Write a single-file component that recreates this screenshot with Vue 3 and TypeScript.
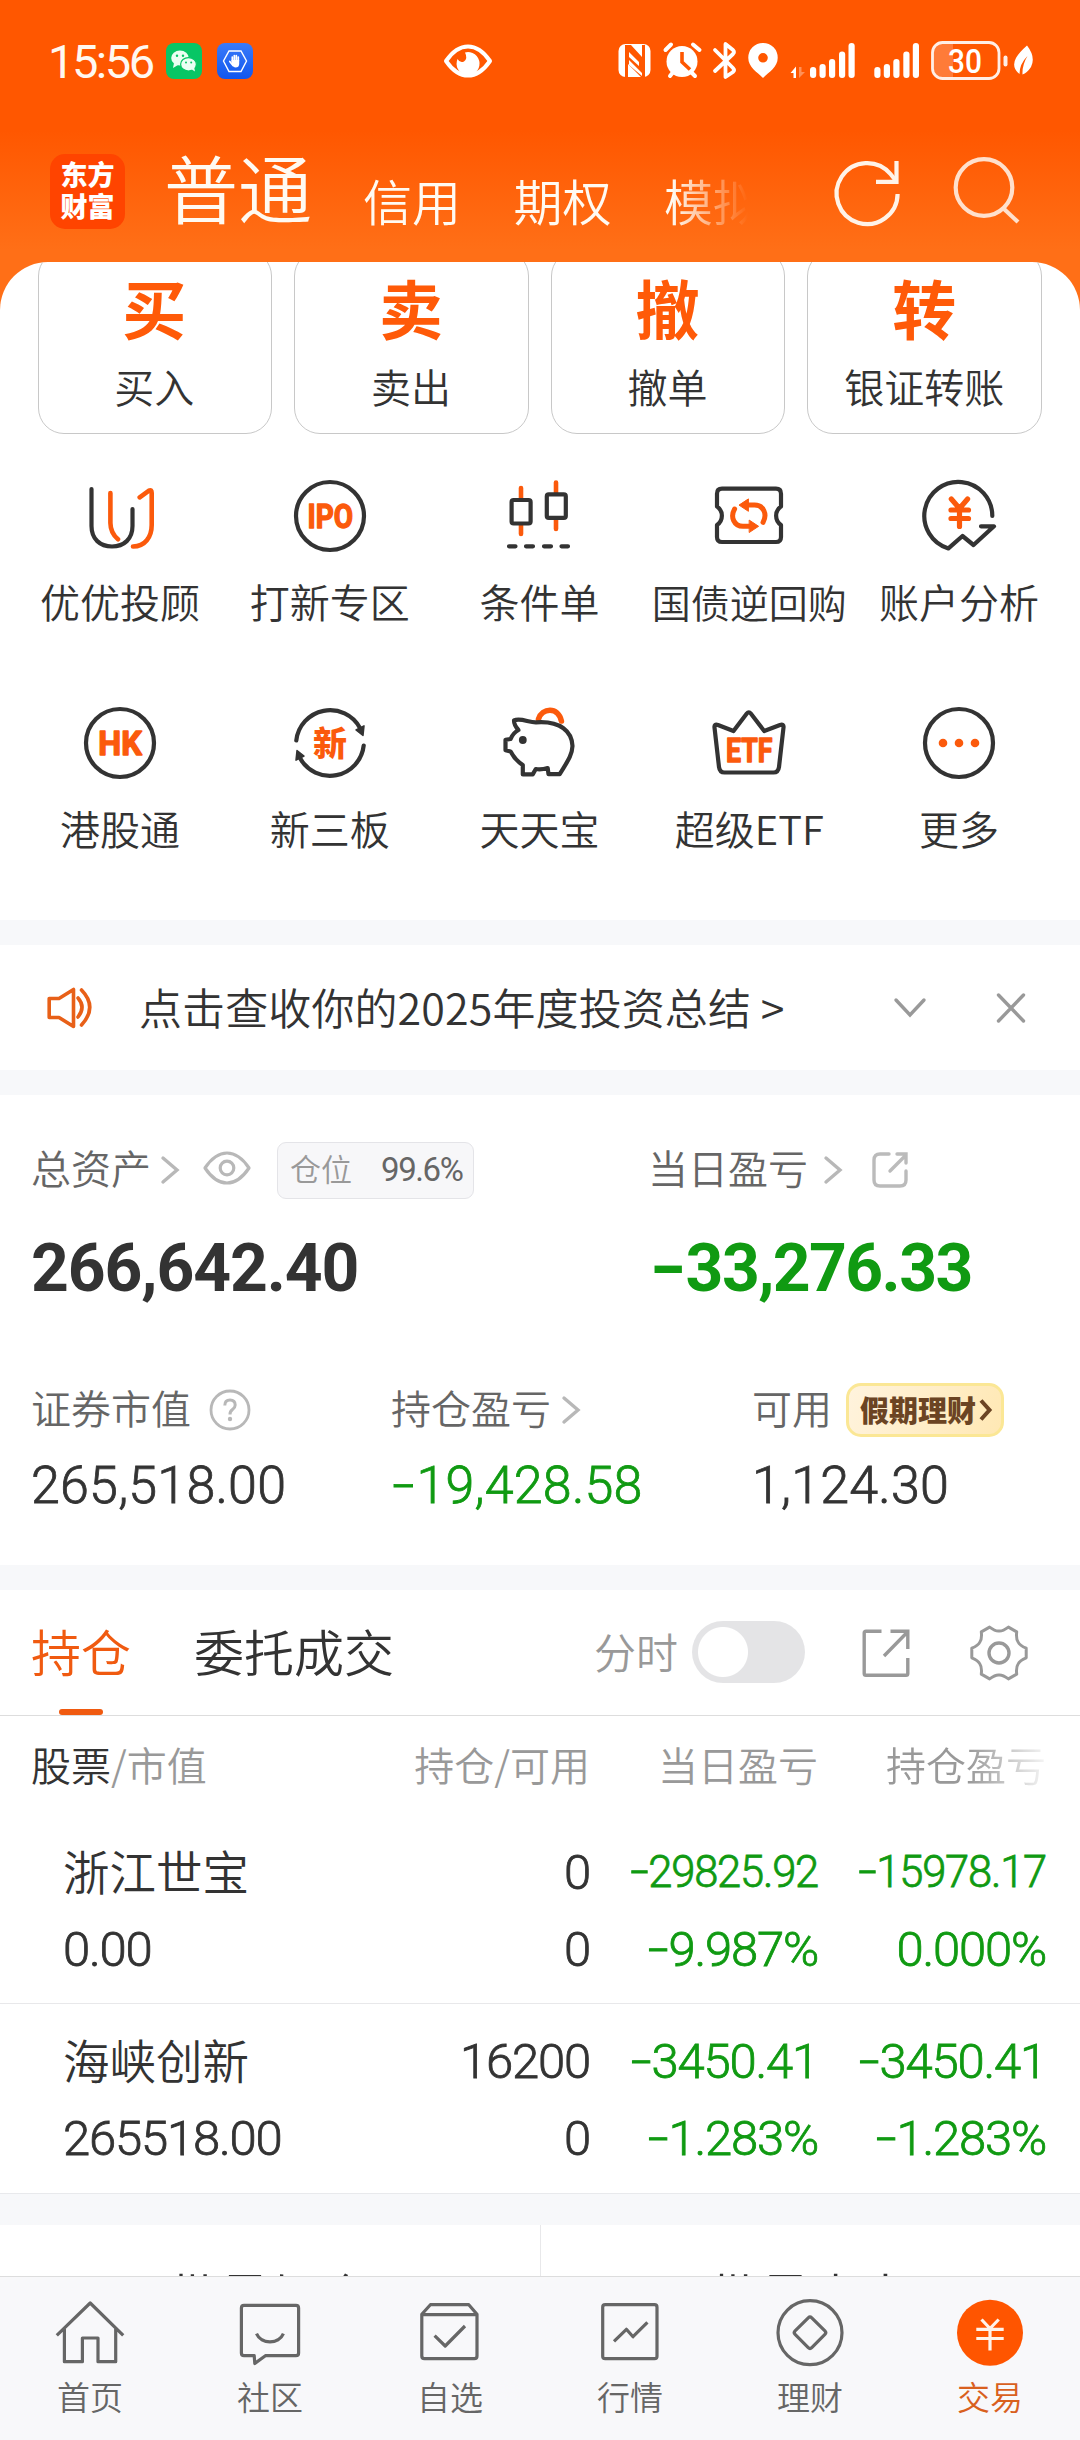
<script setup lang="ts">
interface Tile { icon: string; label: string }
interface Holding {
  name: string; value: string; qty: string; usable: string
  day: string; dayPct: string; total: string; totalPct: string; compact: boolean
}

const orders: Tile[] = [
  { icon: '买', label: '买入' },
  { icon: '卖', label: '卖出' },
  { icon: '撤', label: '撤单' },
  { icon: '转', label: '银证转账' },
]

const D = 'stroke="#333" stroke-width="4.2"'
const O = 'stroke="#fb5a0c" stroke-width="4.6"'
const ring = `<circle cx="40" cy="40" r="34" ${D}/>`
const word = (t: string, x: number, y: number, w: number) =>
  `<text x="${x}" y="${y}" textLength="${w}" lengthAdjust="spacingAndGlyphs" font-family="Roboto, sans-serif" font-weight="700" font-size="33" fill="#fb5a0c" stroke="#fb5a0c" stroke-width="1.4">${t}</text>`

const tiles: Tile[] = [
  { label: '优优投顾', icon: `<path ${D} d="M11.5 13V50C11.5 63 20 70.5 32 70.5S52.5 63 52.5 50V33"/><path ${O} d="M30.4 17V47Q30.5 57 38 63.3M59.7 21.3L69 14.6Q71.7 13.2 71.7 17V49C71.7 61 65 70.5 53 70.5"/>` },
  { label: '打新专区', icon: ring + word('IPO', 17.5, 52, 45.5) },
  { label: '条件单', icon: `<path ${O} d="M22 12V22M22 49V58M57 6.5V17M57 43V53"/><rect ${D} x="12.6" y="24" width="19" height="23.5" rx="2"/><rect ${D} x="47.8" y="18.4" width="19" height="23.5" rx="2"/><path ${D} d="M10 70.3H16.5M27 70.3H34M45 70.3H52M62.5 70.3H69"/>` },
  { label: '国债逆回购', icon: `<path ${D} d="M13 12.7H67Q72 12.7 72 17.7V30.5C65.5 35 65.5 44.5 72 49V61Q72 66 67 66H13Q8 66 8 61V49C14.5 44.5 14.5 35 8 30.5V17.7Q8 12.7 13 12.7Z"/><g id="turn"><path stroke="#fb5a0c" stroke-width="5" d="M25.6 33C21 41 25 50.3 34 50.3H41"/><path fill="#fb5a0c" stroke="#fb5a0c" d="M40.5 44.3L49.6 50.3L40.5 56.3Z"/></g><use href="#turn" transform="rotate(180 39.8 39.7)"/>` },
  { label: '账户分析', icon: `<path ${D} d="M73.3 40A34 34 0 1 0 29.4 72.4L43.5 60L54.5 69L75 50.3H62"/><path stroke="#fb5a0c" stroke-width="5.2" d="M32.3 23L40.5 32.5L48.6 23M32 34H49.5M32 42.5H49.5M40.5 33V50.5"/>` },
  { label: '港股通', icon: ring + word('HK', 18.3, 52, 43.5) },
  { label: '新三板', icon: `<path ${D} d="M6.3 37.5A34 34 0 0 1 70 25M73.7 42.5A34 34 0 0 1 10 55"/><path fill="#333" stroke="#333" stroke-width="1.5" d="M66 27L74 22.8L73 32.5ZM14 53L6 57.2L7 47.5Z"/><text x="23" y="52.5" font-family="Noto Sans CJK SC, sans-serif" font-weight="900" font-size="34" fill="#fb5a0c">新</text>` },
  { label: '天天宝', icon: `<path stroke="#fb5a0c" stroke-width="5.6" d="M39.5 16C43 5 59 3 62.4 18"/><path ${D} fill="#fff" d="M15 17.5C21 14.5 30 19.5 37 19.3C62 17.5 73 29 73.5 43C73 53 68 59 60.7 71.2H49.5L48.7 65Q42 67 36.8 66L33.7 71.4H23.8V62Q16 57 11.6 48.5L6.5 47.3V36.8L11.6 36Q14 30 19.4 27Q15 22 15 17.5Z"/><circle cx="23.8" cy="37" r="3.9" fill="#333"/>` },
  { label: '超级ETF', icon: `<path ${D} d="M5.5 24.5Q5 20.8 9 22L24.5 28L37.8 10.5Q39.8 8 41.8 10.5L55.2 28L71 22Q75 20.8 74.5 24.5L70 64Q69.3 69.5 64.5 69.5H15.5Q10.7 69.5 10 64Z"/>` + word('ETF', 17, 58.7, 46.5) },
  { label: '更多', icon: ring + '<g fill="#fb5a0c"><circle cx="24" cy="40" r="4.3"/><circle cx="40" cy="40" r="4.3"/><circle cx="56" cy="40" r="4.3"/></g>' },
]

const holdings: Holding[] = [
  { name: '浙江世宝', value: '0.00', qty: '0', usable: '0', day: '-29825.92', dayPct: '-9.987%', total: '-15978.17', totalPct: '0.000%', compact: true },
  { name: '海峡创新', value: '265518.00', qty: '16200', usable: '0', day: '-3450.41', dayPct: '-1.283%', total: '-3450.41', totalPct: '-1.283%', compact: false },
]

const nav: Tile[] = [
  { label: '首页', icon: '<path d="M2.8 38.3L36.2 6L69.2 38.3M10.4 32V64.7H28.4V41H44V64.7H61.7V32"/>' },
  { label: '社区', icon: '<path d="M10 8.3H62Q64.6 8.3 64.6 11V56Q64.6 58.7 62 58.7H31.4L20.8 66.5L20.2 58.7H10Q7.4 58.7 7.4 56V11Q7.4 8.3 10 8.3ZM22.5 36.7C27 47.5 45 47.5 49.4 36.7"/>' },
  { label: '自选', icon: '<path d="M7.8 17.3L16.4 7.7H54.8L63 17.3V59Q63 61.7 60.3 61.7H10.5Q7.8 61.7 7.8 59ZM7.8 17.6H63M20.6 38.7L31.2 49L51 29"/>' },
  { label: '行情', icon: '<rect x="8.7" y="7.7" width="54.3" height="54" rx="2.5"/><path d="M20 44.3L32.4 32.3L39 39.7L53.4 25.3"/>' },
  { label: '理财', icon: '<circle cx="36" cy="35.7" r="32"/><rect x="24.2" y="23.9" width="23.6" height="23.6" rx="2.5" transform="rotate(45 36 35.7)"/>' },
  { label: '交易', icon: '<circle cx="36" cy="35.7" r="33" fill="#ff5500" stroke="none"/><path stroke="#fff3ea" stroke-width="3.2" d="M27.5 22.5L36 31.5L44.7 22.5M22.3 32.3H49.7M22.3 41.5H49.7M36 31.5V53.5"/>' },
]

const pt = (deg: number, r: number) => {
  const a = (deg * Math.PI) / 180
  return `${(30 + r * Math.cos(a)).toFixed(1)} ${(30 + r * Math.sin(a)).toFixed(1)}`
}
const gear = Array.from({ length: 6 }, (_, k) => {
  const a = k * 60
  return `${k ? 'L' : 'M'}${pt(a - 10, 27.6)}L${pt(a + 10, 27.6)}Q${pt(a + 20, 22)} ${pt(a + 30, 22)}Q${pt(a + 40, 22)} ${pt(a + 50, 27.6)}`
}).join('') + 'Z'
</script>

<template>
  <div class="app">
    <header class="head">
      <div class="status">
        <span class="time">15:56</span>
        <svg class="s-wx" width="36" height="36" viewBox="0 0 36 36"><rect width="36" height="36" rx="8" fill="#07c665" /><ellipse cx="14" cy="15" rx="8.8" ry="7.5" fill="#eafff3" /><path d="M8 20l-1 5 5-3z" fill="#eafff3" /><ellipse cx="22.5" cy="21.3" rx="7.9" ry="6.7" fill="#eafff3" stroke="#07c665" stroke-width="1.2" /><path d="M25 26l4 2.500-1-5z" fill="#eafff3" /><g fill="#07c665"><circle cx="11" cy="12.700" r="1.200" /><circle cx="17" cy="12.700" r="1.200" /><circle cx="20" cy="19.500" r="1" /><circle cx="25.200" cy="19.500" r="1" /></g></svg>
        <svg class="s-blue" width="36" height="36" viewBox="0 0 36 36"><defs><linearGradient id="bl" x2="0" y2="1"><stop stop-color="#3a7bfa" /><stop offset="1" stop-color="#1156ee" /></linearGradient></defs><rect width="36" height="36" rx="8" fill="url(#bl)" /><path d="M12 8H24L29.500 18L24 28.500H12L6.500 18Z" fill="none" stroke="#fff" stroke-width="1.400" /><path d="M15.300 18V14M17.300 18V12.500M19.300 18V12.500M21.300 18V14M12.800 18.500L16 22.500" stroke="#fff" stroke-width="1.700" stroke-linecap="round" /><path d="M14.500 17H22.200V21Q22 24.500 18.500 24.500Q16.500 24.500 14.500 21Z" fill="#fff" /></svg>
        <svg class="s-eye" width="50" height="36" viewBox="0 0 50 36"><path d="M3 18Q13 3.500 25 3.500T47 18Q37 32.500 25 32.500T3 18Z" fill="none" stroke="#fff" stroke-width="4" stroke-linejoin="round" /><path d="M22 9.500A11.500 11.500 0 1 1 14.500 16Q17 20.500 21 18.500Q25 15.500 22 9.500Z" fill="#fff" /></svg>
        <svg class="s-right" width="420" height="42" viewBox="615 40 420 42">
          <g fill="#fff">
            <rect x="617.500" y="44" width="32" height="33" rx="7" />
            <path d="M624 45H630L641 57V45H644V77H640L627 64V77H624Z" fill="#ff5700" />
            <path d="M628 52L638 62V66L628 57ZM628 60L641 73V76L628 65Z" />
            <circle cx="681" cy="61.500" r="15.500" />
            <path d="M664.500 50L670 44.500M692 44.500L698.500 50M669 76L673 71M689 71L694 76" stroke="#fff" stroke-width="4" stroke-linecap="round" />
            <path d="M681 52V62L689 69.500" fill="none" stroke="#ff5700" stroke-width="3.600" />
            <path d="M714 50L732 68Q734 70 732 72L724.500 77V44L732 50Q734 52 732 54L714 71" fill="none" stroke="#fff" stroke-width="3.800" stroke-linecap="round" stroke-linejoin="round" />
            <path d="M762 43A14.500 14.500 0 0 1 776.700 58C776.700 67 768 72 762 78C756 72 747.300 67 747.300 58A14.500 14.500 0 0 1 762 43ZM762 53A4.800 4.800 0 1 0 762 62.600A4.800 4.800 0 0 0 762 53Z" fill-rule="evenodd" />
            <path d="M789.500 73L795 66.500V78H792.500V73Z" /><path d="M798 67V78L804 72H800.500V67Z" opacity=".35" />
            <g id="bars"><rect x="809" y="67" width="6.200" height="11" rx="3" /><rect x="818.500" y="64" width="6.200" height="14" rx="3" /><rect x="828" y="59" width="6.200" height="19" rx="3" /><rect x="838" y="51.500" width="6.200" height="26.500" rx="3" /><rect x="847.500" y="43" width="6.200" height="35" rx="3" /></g>
            <use href="#bars" x="64.300" />
            <path d="M943 43.500H952V77.500H943Q932.500 77.500 932.500 67V54Q932.500 43.500 943 43.500Z" opacity=".22" />
            <rect x="931.500" y="42.500" width="66.500" height="36" rx="10" fill="none" stroke="#fff" stroke-opacity=".9" stroke-width="2.800" />
            <rect x="1002.500" y="55.500" width="4" height="11" rx="2" opacity=".9" />
            <path d="M1026 45.500Q1035 57 1030 67Q1026 73 1021.500 74.500Q1021 65 1026.500 56Q1018.500 64 1018.500 74Q1010 67 1015 58Q1018 52.500 1026 45.500Z" />
            <text x="947" y="73" font-family="Roboto, sans-serif" font-weight="500" font-size="33" textLength="34" lengthAdjust="spacingAndGlyphs">30</text>
          </g>
        </svg>
      </div>
      <div class="topbar">
        <div class="logo"><span>东方</span><span>财富</span></div>
        <div class="modes"><span class="on">普通</span><span>信用</span><span>期权</span><span>模拟</span></div>
        <svg class="refresh" width="70" height="72" viewBox="0 0 70 72" fill="none" stroke="#fff3e8" stroke-width="4.200"><path d="M64.600 37A30.500 30.500 0 1 1 57.500 17L63.500 24.500" /><path d="M63.500 4V24.800H43" /></svg>
        <svg class="search" width="70" height="72" viewBox="0 0 70 72" fill="none" stroke="#ffe0cc" stroke-width="4.200"><circle cx="32" cy="32.500" r="28.300" /><path d="M51.500 53.500L66 67" /></svg>
      </div>
    </header>

    <main class="panel">
      <div class="orders">
        <div v-for="o in orders" :key="o.label" class="order"><b>{{ o.icon }}</b><span>{{ o.label }}</span></div>
      </div>
      <div class="tiles">
        <div v-for="t in tiles" :key="t.label" class="tile">
          <svg width="80" height="80" viewBox="0 0 80 80" fill="none" stroke-linecap="round" stroke-linejoin="round" v-html="t.icon"></svg>
          <span :class="{ tight: t.label.length === 5 && !t.label.includes('ETF') }">{{ t.label }}</span>
        </div>
      </div>
    </main>

    <section class="notice">
      <svg width="50" height="44" viewBox="0 0 50 44" fill="none" stroke="#e86018" stroke-width="3.600" stroke-linecap="round" stroke-linejoin="round"><path d="M4.200 12.500H14L28.500 3.500V40.500L14 31.500H4.200ZM33 12Q41 21 33 31M36.500 4Q53 21 36.500 39" /></svg>
      <p>点击查收你的2025年度投资总结 &gt;</p>
      <svg class="down" width="34" height="22" viewBox="0 0 34 22" fill="none" stroke="#999" stroke-width="3.400" stroke-linecap="round"><path d="M3 3L17 18L31 3" /></svg>
      <svg class="close" width="30" height="30" viewBox="0 0 30 30" fill="none" stroke="#999" stroke-width="3.400" stroke-linecap="round"><path d="M2.500 2L27.500 28M27.500 2L2.500 28" /></svg>
    </section>

    <section class="assets">
      <div class="line main">
        <div class="left">
          <span class="lab">总资产</span>
          <svg class="chev" width="20" height="30" viewBox="0 0 20 30"><path d="M3 3L17 15L3 27" /></svg>
          <svg class="eye" width="50" height="36" viewBox="0 0 50 36" fill="none" stroke="#b8b8b8" stroke-width="3.200"><path d="M3 18Q13 3 25 3T47 18Q37 33 25 33T3 18Z" stroke-linejoin="round" /><circle cx="25" cy="18" r="6.800" /></svg>
          <div class="pos"><span>仓位</span><i>99.6%</i></div>
        </div>
        <div class="right">
          <span class="lab">当日盈亏</span>
          <svg class="chev" width="20" height="30" viewBox="0 0 20 30"><path d="M3 3L17 15L3 27" /></svg>
          <svg class="share" width="38" height="38" viewBox="0 0 38 38" fill="none" stroke="#bbb" stroke-width="3.400" stroke-linecap="round"><path d="M18 3H9Q3 3 3 9V29Q3 35 9 35H29Q35 35 35 29V20M19 20L34 5M26 3H35V12" /></svg>
        </div>
      </div>
      <div class="line big"><b class="left">266,642.40</b><b class="right green"><em class="dash">-</em>33,276.33</b></div>
      <div class="line sub">
        <div class="c1"><span class="lab">证券市值</span><svg class="help" width="42" height="42" viewBox="0 0 42 42" fill="none" stroke="#b8b8b8" stroke-width="2.800"><circle cx="21" cy="21" r="19" /><path d="M15.800 16.500Q15.800 11 21 11T26.200 16Q26.200 18.500 23.500 20.500T21 25.500" stroke-width="3" /><circle cx="21" cy="30" r="2.200" fill="#b8b8b8" stroke="none" /></svg></div>
        <div class="c2"><span class="lab">持仓盈亏</span><svg class="chev" width="20" height="30" viewBox="0 0 20 30"><path d="M3 3L17 15L3 27" /></svg></div>
        <div class="c3"><span class="lab">可用</span>
          <div class="promo"><span>假期理财</span><svg width="14" height="24" viewBox="0 0 14 24" fill="none" stroke="#6b4423" stroke-width="4"><path d="M2 2.500L10.500 12L2 21.500" /></svg></div>
        </div>
      </div>
      <div class="line nums"><span class="c1">265,518.00</span><span class="c2 green"><em class="dash">-</em>19,428.58</span><span class="c3">1,124.30</span></div>
    </section>

    <section class="hold">
      <div class="tabs">
        <span class="tab on">持仓</span><span class="tab">委托成交</span>
        <span class="fs">分时</span>
        <span class="switch"></span>
        <svg class="out" width="50" height="50" viewBox="0 0 50 50" fill="none" stroke="#999" stroke-width="3.400"><path d="M20.500 3.200H5Q3.200 3.200 3.200 5V45.500Q3.200 47.300 5 47.300H45Q46.800 47.300 46.800 45.500V30M29.500 3.200H46.800V21M23 28L46 4.500" /></svg>
        <svg class="gear" width="60" height="60" viewBox="0 0 60 60" fill="none" stroke="#999" stroke-width="3" stroke-linejoin="round"><path :d="gear" /><circle cx="30" cy="30" r="10" stroke-width="3.400" /></svg>
      </div>
      <div class="row thead"><span class="a"><em>股票</em>/市值</span><span>持仓/可用</span><span>当日盈亏</span><span class="fade">持仓盈亏</span></div>
      <div v-for="h in holdings" :key="h.name" class="item">
        <div class="row"><span class="a name">{{ h.name }}</span><span class="n">{{ h.qty }}</span><span class="n green" :class="{ compact: h.compact }"><em class="dash">{{ h.day.charAt(0) }}</em>{{ h.day.slice(1) }}</span><span class="n green" :class="{ compact: h.compact }"><em class="dash">{{ h.total.charAt(0) }}</em>{{ h.total.slice(1) }}</span></div>
        <div class="row"><span class="a n">{{ h.value }}</span><span class="n">{{ h.usable }}</span><span class="n green"><em class="dash">{{ h.dayPct.charAt(0) }}</em>{{ h.dayPct.slice(1) }}</span><span class="n green"><template v-if="h.totalPct.startsWith('-')"><em class="dash">-</em>{{ h.totalPct.slice(1) }}</template><template v-else>{{ h.totalPct }}</template></span></div>
      </div>
    </section>

    <div class="batch"><span>批量加仓</span><span>批量卖出</span></div>

    <nav class="nav">
      <div v-for="n in nav" :key="n.label" class="nitem" :class="{ on: n.label === '交易' }">
        <svg width="72" height="72" viewBox="0 0 72 72" fill="none" stroke="#666" stroke-width="3.200" stroke-linejoin="round" v-html="n.icon"></svg>
        <span>{{ n.label }}</span>
      </div>
    </nav>
  </div>
</template>

<style>
body { margin: 0; background: #f7f8fa; }
</style>

<style scoped>
.app { width: 1080px; height: 2440px; overflow: hidden; display: flex; flex-direction: column; background: #f7f8fa; color: #333; font-family: "Noto Sans CJK SC", sans-serif; font-weight: 350; }
.app * { box-sizing: border-box; }
svg { display: block; flex: none; overflow: visible; }
span, b, p, i { white-space: nowrap; }
em, i { font-style: normal; }
.green { color: #109a12; }
.dash { display: inline-block; transform: scaleX(1.5) translateY(-0.02em); margin: 0 0.1em; }

.head { height: 310px; flex: none; background: linear-gradient(#ff5700 0, #ff5700 130px, #ff6f17 250px, #ff6f17 310px); }
.status { height: 122px; display: flex; align-items: center; }
.time { width: 115px; margin-left: 48px; padding-top: 2px; font: 400 47px/60px Roboto, sans-serif; letter-spacing: -2.5px; color: #fff8f0; }
.s-wx { margin-left: 3px; }
.s-blue { margin-left: 15px; }
.s-eye { margin-left: 190px; }
.s-right { margin-left: 122.500px; }
.topbar { height: 140px; display: flex; align-items: flex-start; color: #fffaf2; }
.logo { width: 75px; height: 75px; margin: 32px 0 0 50px; border-radius: 15px; background: #ff4400; display: flex; flex-direction: column; align-items: center; justify-content: center; padding-bottom: 3px; font-size: 27px; line-height: 32px; font-weight: 900; color: #fff; }
.modes { width: 590px; height: 130px; margin-left: 39px; display: flex; align-items: flex-start; gap: 52.500px; overflow: hidden; font-size: 49px; mask-image: linear-gradient(90deg, #000 508px, transparent 584px); }
.modes span { flex: none; line-height: 74px; padding-top: 41px; }
.modes .on { font-size: 74px; line-height: 108px; padding-top: 10px; margin-right: -1.500px; }
.refresh { margin: 34.500px 0 0 79px; }
.search { margin: 33px 0 0 49px; }

.panel { height: 658px; flex: none; margin-top: -48px; border-radius: 48px 48px 0 0; background: #fff; overflow: hidden; }
.orders { display: flex; gap: 22px; padding: 0 38px 0 37.500px; margin-top: -12px; }
.order { flex: 1; height: 184px; border: 1.500px solid #c8c8c8; border-radius: 26px; display: flex; flex-direction: column; align-items: center; padding-right: 1px; }
.order b { font-size: 64px; line-height: 64px; margin-top: 23px; font-weight: 700; color: #ff5a08; }
.order span { font-size: 40px; line-height: 60px; margin-top: 18px; }
.tiles { display: flex; flex-wrap: wrap; padding: 0 16px 0 15px; margin-top: 42px; }
.tile { width: 20%; height: 226.500px; display: flex; flex-direction: column; align-items: center; font-size: 40px; }
.tile span { line-height: 60px; margin-top: 15px; }
.tile .tight { font-size: 39px; }

.notice { height: 125px; flex: none; margin-top: 25px; background: #fff; display: flex; align-items: center; padding-left: 45px; }
.notice p { width: 705px; margin: -4px 0 0 44px; font-size: 43px; line-height: 60px; letter-spacing: .1px; }
.down { margin-left: 49px; }
.close { margin-left: 69px; }

.assets { height: 470px; flex: none; margin-top: 25px; background: #fff; padding: 47px 0 0 31px; }
.line, .left, .right, .c1, .c2, .c3 { display: flex; align-items: center; }
.main { height: 56px; }
.left { width: 617px; }
.lab { font-size: 40px; line-height: 56px; color: #666; margin-top: -6px; }
.chev { fill: none; stroke: #b8b8b8; stroke-width: 3.400px; stroke-linecap: round; }
.left .chev { margin-left: 9px; }
.eye { margin: -5px 0 0 22px; }
.pos { height: 57px; width: 197px; margin-left: 25px; border: 1.500px solid #e4e4e8; border-radius: 9px; background: #f7f7f9; display: flex; align-items: center; padding-left: 12px; color: #999; }
.pos span { font-size: 31px; line-height: 40px; margin-top: -4px; width: 91px; }
.pos i { font: 400 33px/40px Roboto, sans-serif; letter-spacing: -1.4px; color: #666; }
.right .chev { margin-left: 15px; }
.share { margin-left: 28px; }
.big { height: 80px; margin-top: 31px; }
.big b { font: 700 66px/80px Roboto, sans-serif; letter-spacing: -1.1px; }
.big .green { letter-spacing: -1.6px; }
.sub { height: 54px; margin-top: 74px; }
.c1 { width: 360px; }
.c2 { width: 361px; }
.help { margin-left: 18px; }
.c2 .chev { margin-left: 10px; }
.promo { height: 54px; width: 158px; margin-left: 14px; border: 3px solid #fbe795; border-radius: 15px; background: linear-gradient(110deg, #fff3dd, #ffe8b4); display: flex; align-items: center; padding-left: 11px; color: #6b4423; font-weight: 800; }
.promo span { font-size: 29px; line-height: 40px; margin-top: -3px; margin-right: 3px; }
.nums { height: 60px; margin-top: 19px; font: 300 52px/60px Roboto, sans-serif; letter-spacing: .2px; -webkit-text-stroke: .8px; }

.hold { height: 604px; flex: none; margin-top: 25px; background: #fff; border-bottom: 1px solid #e8e9ec; }
.tabs { height: 126px; display: flex; align-items: center; border-bottom: 1px solid #ddd; padding-left: 31px; }
.tab { position: relative; font-size: 50px; line-height: 118px; margin: -5px 63px 0 0; }
.tab.on { color: #f05a10; }
.tab.on::after { content: ""; position: absolute; left: 28px; bottom: -6px; width: 44px; height: 6px; border-radius: 3px; background: #f05a10; }
.fs { width: 98px; margin: -3px 0 0 137px; font-size: 42px; line-height: 60px; color: #999; }
.switch { width: 113px; height: 62px; border-radius: 31px; background: radial-gradient(circle at 31px 31px, #fff 24.500px, #e4e4e6 25.500px); margin-top: -1px; }
.out { margin-left: 56px; }
.gear { margin-left: 58px; }
.row { display: grid; grid-template-columns: 340px 219px 228px 228px; padding-left: 31px; align-items: center; }
.row > span { text-align: right; }
.row > .a { text-align: left; }
.thead { height: 96px; font-size: 40px; line-height: 60px; color: #999; }
.thead em { color: #333; }
.fade { mask-image: linear-gradient(90deg, #000 150px, rgba(0, 0, 0, .12) 226px); }
.item { height: 191px; padding-top: 23px; }
.item + .item { height: 190px; border-top: 1px solid #e8e8ea; padding-top: 20px; }
.item .row { height: 76.500px; }
.item .row > .a { padding-left: 32px; }
.item .name { font-size: 46.500px; line-height: 60px; margin-top: -6px; }
.n { font: 300 49px/60px Roboto, sans-serif; letter-spacing: -1.200px; -webkit-text-stroke: .8px; }
.n.compact { font-size: 43.500px; letter-spacing: -1.2px; }

.batch { height: 51px; flex: none; margin-top: 31px; overflow: hidden; background: #fff; display: flex; }
.batch span { width: 50%; text-align: center; font-size: 50px; line-height: 74px; padding-top: 32px; }
.batch span + span { border-left: 1px solid #e8e8ea; }
.nav { flex: 1; background: #f8f8fa; border-top: 1px solid #ddd; display: flex; }
.nitem { width: 180px; padding-top: 20px; display: flex; flex-direction: column; align-items: center; font-size: 33px; color: #666; }
.nitem span { line-height: 44px; margin-top: 5px; }
.nitem.on { color: #d9601e; }
</style>
